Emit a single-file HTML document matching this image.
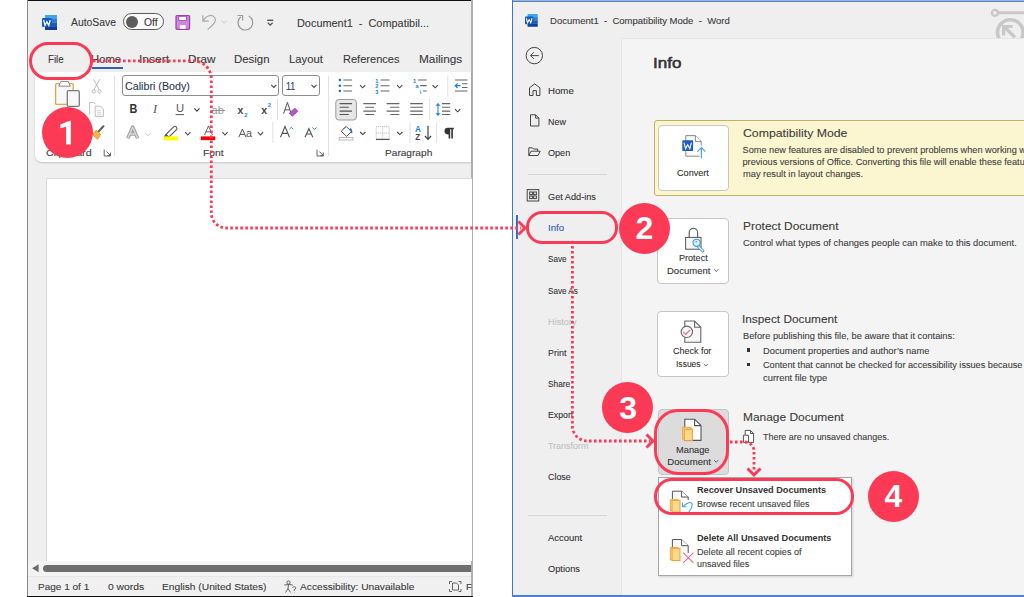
<!DOCTYPE html><html><head><meta charset="utf-8"><style>html,body{margin:0;padding:0;width:1024px;height:597px;overflow:hidden;background:#fff;position:relative}div{box-sizing:border-box}svg{position:absolute;overflow:visible}</style></head><body>
<div style="position:absolute;left:27px;top:0px;width:446px;height:597px;background:#efefef;"></div>
<div style="position:absolute;left:27px;top:0px;width:446px;height:1.2px;background:#111;"></div>
<div style="position:absolute;left:27px;top:0px;width:1px;height:597px;background:#8a8a8a;"></div>
<div style="position:absolute;left:471px;top:0px;width:2px;height:597px;background:#b0b0b0;"></div>
<div style="position:absolute;left:27px;top:596px;width:446px;height:1px;background:#111;"></div>
<div style="position:absolute;left:71.40px;top:17.00px;font-family:'Liberation Sans',sans-serif;font-size:10.8px;line-height:10.8px;font-weight:400;color:#3b3b3b;white-space:pre;transform:scaleX(0.9591);transform-origin:0 0;-webkit-text-stroke:0.1px currentColor;">AutoSave</div>
<div style="position:absolute;left:123.2px;top:13.4px;width:40.5px;height:17.1px;border:1.3px solid #5a5a5a;border-radius:9px;background:#fafafa;"></div>
<div style="position:absolute;left:126px;top:15.7px;width:12px;height:12px;border-radius:50%;background:#5c5c5c;"></div>
<div style="position:absolute;left:143.70px;top:17.00px;font-family:'Liberation Sans',sans-serif;font-size:10.6px;line-height:10.6px;font-weight:400;color:#3b3b3b;white-space:pre;transform:scaleX(0.9791);transform-origin:0 0;-webkit-text-stroke:0.1px currentColor;">Off</div>
<div style="position:absolute;left:297.40px;top:18.00px;font-family:'Liberation Sans',sans-serif;font-size:10.8px;line-height:10.8px;font-weight:400;color:#3b3b3b;white-space:pre;transform:scaleX(1.0098);transform-origin:0 0;-webkit-text-stroke:0.1px currentColor;">Document1  -  Compatibil...</div>
<svg style="left:0;top:0" width="1024" height="597" viewBox="0 0 1024 597"><g transform="translate(42,15) scale(1.0)">
<rect x="3" y="0" width="12" height="3.9" fill="#41a5ee"/>
<rect x="3" y="3.75" width="12" height="3.9" fill="#2b7cd3"/>
<rect x="3" y="7.5" width="12" height="3.9" fill="#185abd"/>
<rect x="3" y="11.25" width="12" height="3.75" fill="#103f91"/>
<rect x="0" y="3" width="9.8" height="9" rx="1" fill="#185abd"/>
<path d="M1.6 5.0 L3.0 10.4 L4.9 6.6 L6.8 10.4 L8.2 5.0" stroke="#fff" stroke-width="1.25" fill="none"/>
</g>
<rect x="176" y="15.5" width="13.6" height="13.8" rx="1" fill="#c98bd6" stroke="#a23cb4" stroke-width="1.2"/>
<rect x="178.8" y="16.3" width="7.6" height="4.2" fill="#fff" stroke="#a23cb4" stroke-width="0.8"/>
<rect x="179.8" y="25.2" width="5.8" height="3.6" fill="#fff"/>
<path d="M202.8 15.3 V21.2 H208.7 M203.3 20.7 C206 15.5 212 13.5 215 18 C217.3 21.5 211.5 26.5 207.6 29.6" stroke="#aaa" stroke-width="1.2" fill="none"/>
<path d="M221.5 20.599999999999998 L224.1 23.2 L226.7 20.599999999999998" stroke="#c4c4c4" stroke-width="1.0" fill="none"/>
<path d="M240.8 16.8 A7.4 7.4 0 1 0 248.7 16.0" stroke="#999" stroke-width="1.2" fill="none"/>
<path d="M237.6 15.5 H242.6 V20.5" stroke="#999" stroke-width="1.2" fill="none"/>
<path d="M267.2 20.3 H273.3" stroke="#555" stroke-width="1.4"/>
<path d="M267.8 22.8 L270.2 25.2 L272.59999999999997 22.8" stroke="#555" stroke-width="1.3" fill="none"/></svg>
<div style="position:absolute;left:48.30px;top:54.00px;font-family:'Liberation Sans',sans-serif;font-size:10.8px;line-height:10.8px;font-weight:400;color:#3a3a3a;white-space:pre;transform:scaleX(0.8969);transform-origin:0 0;-webkit-text-stroke:0.1px currentColor;">File</div>
<div style="position:absolute;left:91.40px;top:54.00px;font-family:'Liberation Sans',sans-serif;font-size:10.8px;line-height:10.8px;font-weight:400;color:#3a3a3a;white-space:pre;transform:scaleX(1.0453);transform-origin:0 0;-webkit-text-stroke:0.1px currentColor;">Home</div>
<div style="position:absolute;left:138.68px;top:54.00px;font-family:'Liberation Sans',sans-serif;font-size:10.8px;line-height:10.8px;font-weight:400;color:#3a3a3a;white-space:pre;transform:scaleX(1.1153);transform-origin:0 0;-webkit-text-stroke:0.1px currentColor;">Insert</div>
<div style="position:absolute;left:188.00px;top:54.00px;font-family:'Liberation Sans',sans-serif;font-size:10.8px;line-height:10.8px;font-weight:400;color:#3a3a3a;white-space:pre;transform:scaleX(1.0867);transform-origin:0 0;-webkit-text-stroke:0.1px currentColor;">Draw</div>
<div style="position:absolute;left:234.00px;top:54.00px;font-family:'Liberation Sans',sans-serif;font-size:10.8px;line-height:10.8px;font-weight:400;color:#3a3a3a;white-space:pre;transform:scaleX(1.0564);transform-origin:0 0;-webkit-text-stroke:0.1px currentColor;">Design</div>
<div style="position:absolute;left:289.00px;top:54.00px;font-family:'Liberation Sans',sans-serif;font-size:10.8px;line-height:10.8px;font-weight:400;color:#3a3a3a;white-space:pre;transform:scaleX(1.0427);transform-origin:0 0;-webkit-text-stroke:0.1px currentColor;">Layout</div>
<div style="position:absolute;left:342.60px;top:54.00px;font-family:'Liberation Sans',sans-serif;font-size:10.8px;line-height:10.8px;font-weight:400;color:#3a3a3a;white-space:pre;transform:scaleX(1.0230);transform-origin:0 0;-webkit-text-stroke:0.1px currentColor;">References</div>
<div style="position:absolute;left:418.50px;top:54.00px;font-family:'Liberation Sans',sans-serif;font-size:10.8px;line-height:10.8px;font-weight:400;color:#3a3a3a;white-space:pre;transform:scaleX(1.0919);transform-origin:0 0;-webkit-text-stroke:0.1px currentColor;">Mailings</div>
<div style="position:absolute;left:91.8px;top:67px;width:31px;height:2px;background:#2f62b8;"></div>
<div style="position:absolute;left:34.5px;top:71.5px;width:436.5px;height:90px;background:#fff;border-radius:7px 0 0 7px;box-shadow:0 1px 2px rgba(0,0,0,0.18);"></div>
<div style="position:absolute;left:46.30px;top:148.00px;font-family:'Liberation Sans',sans-serif;font-size:9.6px;line-height:9.6px;font-weight:400;color:#3b3b3b;white-space:pre;transform:scaleX(1.1098);transform-origin:0 0;-webkit-text-stroke:0.1px currentColor;">Clipboard</div>
<div style="position:absolute;left:203.00px;top:148.00px;font-family:'Liberation Sans',sans-serif;font-size:9.6px;line-height:9.6px;font-weight:400;color:#3b3b3b;white-space:pre;transform:scaleX(1.0752);transform-origin:0 0;-webkit-text-stroke:0.1px currentColor;">Font</div>
<div style="position:absolute;left:384.80px;top:148.00px;font-family:'Liberation Sans',sans-serif;font-size:9.6px;line-height:9.6px;font-weight:400;color:#3b3b3b;white-space:pre;transform:scaleX(1.0547);transform-origin:0 0;-webkit-text-stroke:0.1px currentColor;">Paragraph</div>
<div style="position:absolute;left:122.4px;top:75px;width:156.8px;height:21px;border:1px solid #8d8d8d;border-radius:3px;background:#fff;"></div>
<div style="position:absolute;left:125.20px;top:81.00px;font-family:'Liberation Sans',sans-serif;font-size:10.5px;line-height:10.5px;font-weight:400;color:#2b3a55;white-space:pre;transform:scaleX(1.0205);transform-origin:0 0;-webkit-text-stroke:0.1px currentColor;">Calibri (Body)</div>
<div style="position:absolute;left:282px;top:75px;width:38px;height:21px;border:1px solid #8d8d8d;border-radius:3px;background:#fff;"></div>
<div style="position:absolute;left:285.60px;top:81.00px;font-family:'Liberation Sans',sans-serif;font-size:10.5px;line-height:10.5px;font-weight:400;color:#2b3a55;white-space:pre;transform:scaleX(0.8408);transform-origin:0 0;-webkit-text-stroke:0.1px currentColor;">11</div>
<div style="position:absolute;left:114px;top:76px;width:1px;height:80px;background:#e1e1e1;"></div>
<div style="position:absolute;left:327.5px;top:76px;width:1px;height:80px;background:#e1e1e1;"></div>
<svg style="left:0;top:0" width="1024" height="597" viewBox="0 0 1024 597">
<rect x="55.6" y="83.6" width="17.6" height="20.8" rx="1" fill="#f6f8fc" stroke="#e9a440" stroke-width="1.3"/>
<path d="M58.8 86.2 L60.8 81.4 H68.2 L70.2 86.2 Z" fill="#fff" stroke="#8a8a8a" stroke-width="1"/>
<rect x="67.3" y="90.6" width="12" height="15.8" rx="1.5" fill="#f8f8f8" stroke="#7a7a7a" stroke-width="1.3"/>
<path d="M93.5 79.2 L99.5 90 M99.8 79.2 L93.8 90" stroke="#b5b5b5" stroke-width="0.9" fill="none"/>
<circle cx="93.9" cy="91.4" r="1.6" stroke="#b5b5b5" stroke-width="0.9" fill="none"/>
<circle cx="99.4" cy="91.4" r="1.6" stroke="#b5b5b5" stroke-width="0.9" fill="none"/>
<path d="M89.6 114.4 V102.6 H93.8 L95.2 104" stroke="#b8b8b8" stroke-width="0.9" fill="none"/>
<path d="M95.2 106.2 H100.5 L103.4 109.1 V116.4 H95.2 Z" stroke="#b8b8b8" stroke-width="0.9" fill="#fafafa"/>
<path d="M97.2 110.5 H100.8 M97.2 112.5 H100.8 M97.2 114.3 H100.8" stroke="#cfcfcf" stroke-width="0.8"/>
<path d="M103.4 126.3 L98.6 131.5" stroke="#666" stroke-width="2.2" stroke-linecap="round"/>
<path d="M96 130.2 L100.6 134.6 L97.6 139.2 L92.6 134.6 Z" fill="#f3b54a" stroke="#e0942a" stroke-width="0.9"/>
<path d="M104.2 149.5 V156 H110.7 M106.5 151.5 L110.5 155.5 M110.5 152.5 V155.5 H107.5" stroke="#555" stroke-width="0.9" fill="none"/>
<path d="M271.3 84.95 L273.8 87.45 L276.3 84.95" stroke="#444" stroke-width="1.1" fill="none"/><path d="M311.5 84.95 L314 87.45 L316.5 84.95" stroke="#444" stroke-width="1.1" fill="none"/>
<text transform="translate(129.4,113.2) scale(0.86,1)" font-family="Liberation Sans" font-weight="700" font-size="12.6" fill="#333">B</text>
<text x="153" y="113.2" font-family="Liberation Serif" font-style="italic" font-size="12.4" fill="#555">I</text>
<text x="176" y="112.2" font-family="Liberation Sans" font-size="11.2" fill="#555">U</text>
<path d="M175.6 114.6 H184" stroke="#555" stroke-width="1"/>
<path d="M194.3 108.39999999999999 L196.9 111.2 L199.5 108.39999999999999" stroke="#444" stroke-width="1.1" fill="none"/>
<text x="211.6" y="114" font-family="Liberation Sans" font-size="11" fill="#9a9a9a">ab</text>
<path d="M211 110.5 H225" stroke="#8a8a8a" stroke-width="0.9"/>
<text x="237.6" y="113.6" font-family="Liberation Sans" font-weight="700" font-size="10.5" fill="#444">x</text>
<text x="244.2" y="116.6" font-family="Liberation Sans" font-weight="700" font-size="6" fill="#2a8ad8">2</text>
<text x="261.2" y="113.6" font-family="Liberation Sans" font-weight="700" font-size="10.5" fill="#444">x</text>
<text x="267.8" y="107.2" font-family="Liberation Sans" font-weight="700" font-size="6" fill="#2a8ad8">2</text>
<path d="M277.5 99 V120 M272.8 122 V143 M429.7 99 V120 M447.8 75.5 V96.5 M410 122 V143 M436.6 122 V143" stroke="#e0e0e0" stroke-width="1"/>
<path d="M283.6 113.7 L287.4 102.4 L291.2 113.7 M284.9 109.8 H289.9" stroke="#555" stroke-width="1" fill="none"/>
<path d="M289.3 113.2 L294.8 108.2 L297.8 111.2 L292.3 116.2 Z" fill="#b257c8" stroke="#9a3ab4" stroke-width="0.8"/>
<path d="M127.8 138.4 L132.7 127.2 L137.6 138.4 M129.8 134 H135.6" stroke="#a0a0a0" stroke-width="3.6" fill="none" stroke-linejoin="round"/>
<path d="M127.8 138.4 L132.7 127.2 L137.6 138.4 M129.8 134 H135.6" stroke="#d8d8d8" stroke-width="1.4" fill="none" stroke-linejoin="round"/>
<path d="M145.20000000000002 133.25 L147.8 135.75 L150.4 133.25" stroke="#c8c8c8" stroke-width="1.0" fill="none"/>
<path d="M166 134.4 L173.6 126.8 Q175 125.6 176.4 127 Q177.6 128.4 176.4 129.6 L168.8 137.2 Z M166 134.4 L164.6 136.6 L168.8 137.2" fill="#fff" stroke="#555" stroke-width="1.1" stroke-linejoin="round"/>
<rect x="163.9" y="136.4" width="14.1" height="4" fill="#ffff00"/>
<path d="M185.20000000000002 132.2 L187.8 135.0 L190.4 132.2" stroke="#444" stroke-width="1.1" fill="none"/>
<path d="M204.5 135.1 L208.5 125.9 L212.5 135.1 M205.8 131.8 H211.2" stroke="#555" stroke-width="0.9" fill="none"/>
<rect x="200.8" y="136.4" width="14.5" height="3.7" fill="#ff0000"/>
<path d="M222.4 132.2 L225 135.0 L227.6 132.2" stroke="#444" stroke-width="1.1" fill="none"/>
<path d="M238.8 137.3 L242.4 129 L246 137.3 M240 134.4 H244.8" stroke="#555" stroke-width="1" fill="none"/>
<text x="246" y="137.4" font-family="Liberation Sans" font-size="10.8" fill="#555">a</text>
<path d="M257.9 132.2 L260.5 135.0 L263.1 132.2" stroke="#444" stroke-width="1.1" fill="none"/>
<path d="M280.5 137.3 L285 126.5 L289.5 137.3 M282 133.4 H288" stroke="#555" stroke-width="1.1" fill="none"/>
<path d="M289.4 129.2 L291.3 127.3 L293.2 129.2" stroke="#2a8ad8" stroke-width="1" fill="none"/>
<path d="M305 137.3 L308.9 128.7 L312.8 137.3 M306.3 134 H311.5" stroke="#555" stroke-width="1.1" fill="none"/>
<path d="M312.4 127.5 L314.5 129.4 L316.6 127.5" stroke="#2a8ad8" stroke-width="1" fill="none"/>
<path d="M317 149.5 V156 H323.5 M319.3 151.5 L323.3 155.5 M323.3 152.5 V155.5 H320.3" stroke="#555" stroke-width="0.9" fill="none"/>
<circle cx="339.9" cy="80" r="1.3" fill="#1a6fd0"/><circle cx="339.9" cy="85.7" r="1.3" fill="#1a6fd0"/><circle cx="339.9" cy="91" r="1.3" fill="#1a6fd0"/>
<path d="M343.3 80 H352.1 M343.3 85.7 H352.1 M343.3 91 H352.1" stroke="#666" stroke-width="1.1"/>
<path d="M360.05 85.2 L362.7 87.8 L365.34999999999997 85.2" stroke="#444" stroke-width="1.1" fill="none"/>
<text x="375.2" y="82.6" font-family="Liberation Sans" font-weight="700" font-size="5.6" fill="#1a7fe0">1</text>
<text x="375.2" y="88.2" font-family="Liberation Sans" font-weight="700" font-size="5.6" fill="#1a7fe0">2</text>
<text x="375.2" y="93.6" font-family="Liberation Sans" font-weight="700" font-size="5.6" fill="#1a7fe0">3</text>
<path d="M380.6 80 H389.5 M380.6 85.7 H389.5 M380.6 91 H389.5" stroke="#666" stroke-width="1.1"/>
<path d="M396.95000000000005 85.2 L399.6 87.8 L402.25 85.2" stroke="#444" stroke-width="1.1" fill="none"/>
<text x="413" y="82.6" font-family="Liberation Sans" font-weight="700" font-size="5.6" fill="#1a7fe0">1</text>
<text x="415.4" y="88" font-family="Liberation Sans" font-weight="700" font-size="5.6" fill="#1a7fe0">a</text>
<text x="419.8" y="93.6" font-family="Liberation Sans" font-weight="700" font-size="5.6" fill="#1a7fe0">i</text>
<path d="M418 80 H426.7 M420.2 85.6 H426.7 M423 91 H426.7" stroke="#666" stroke-width="1.1"/>
<path d="M432.55 85.2 L435.2 87.8 L437.84999999999997 85.2" stroke="#444" stroke-width="1.1" fill="none"/>
<path d="M455 80 H467.5 M462 83.8 H467.5 M462 87.5 H467.5 M455 91 H467.5" stroke="#666" stroke-width="1.1"/>
<path d="M455.3 85.7 H460.5 M457.6 83.4 L455.3 85.7 L457.6 88" stroke="#1a7fe0" stroke-width="1.2" fill="none"/>
<rect x="335.8" y="99.5" width="20.6" height="20.5" rx="3" fill="#e6e6e6" stroke="#9a9a9a" stroke-width="1"/>
<path d="M339.6 103.6 H352 M339.6 107.3 H348.8 M339.6 111.1 H352 M339.6 114.5 H348.8" stroke="#555" stroke-width="1.1"/>
<path d="M363.3 103.6 H376 M365.2 107.3 H374 M363.3 111.1 H376 M365.2 114.5 H374" stroke="#666" stroke-width="1.1"/>
<path d="M386.6 103.6 H399.4 M390.2 107.3 H399.4 M386.6 111.1 H399.4 M390.2 114.5 H399.4" stroke="#666" stroke-width="1.1"/>
<path d="M410.2 103.6 H422.9 M410.2 107.3 H422.9 M410.2 111.1 H422.9 M410.2 114.5 H422.9" stroke="#666" stroke-width="1.1"/>
<path d="M438 105 V114" stroke="#1a7fe0" stroke-width="1"/>
<path d="M436.2 105.6 L438 103.3 L439.8 105.6 Z M436.2 113.4 L438 115.7 L439.8 113.4 Z" fill="#1a7fe0" stroke="#1a7fe0" stroke-width="0.6"/>
<path d="M442 103.6 H450.2 M442 107.3 H450.2 M442 111.1 H450.2 M442 114.5 H450.2" stroke="#666" stroke-width="1.1"/>
<path d="M454.95000000000005 109.2 L457.6 111.8 L460.25 109.2" stroke="#444" stroke-width="1.1" fill="none"/>
<path d="M341.2 131.2 L346.2 126.4 L351.4 131.6 L346.6 136.4 Z M343.4 129 L345.2 127.2" fill="#fff" stroke="#555" stroke-width="1"/>
<path d="M350 128.6 Q352 129.6 351.6 133.2" stroke="#1a6fd0" stroke-width="1.4" fill="none"/>
<rect x="339.2" y="137.4" width="13.8" height="2.6" fill="#fff" stroke="#aaa" stroke-width="0.8"/>
<path d="M360.15000000000003 132.0 L362.8 134.60000000000002 L365.45 132.0" stroke="#444" stroke-width="1.1" fill="none"/>
<rect x="376.2" y="126.6" width="13" height="13" fill="none" stroke="#aaa" stroke-width="0.8" stroke-dasharray="1 1"/>
<path d="M382.7 126.6 V139.6 M376.2 133.1 H389.2" stroke="#aaa" stroke-width="0.8" stroke-dasharray="1 1"/>
<path d="M376 139.4 H389.5" stroke="#555" stroke-width="1.3"/>
<path d="M397.15000000000003 132.0 L399.8 134.60000000000002 L402.45 132.0" stroke="#444" stroke-width="1.1" fill="none"/>
<text x="415" y="131.8" font-family="Liberation Sans" font-weight="700" font-size="8.2" fill="#1a7fe0">A</text>
<text x="415.2" y="140.2" font-family="Liberation Sans" font-weight="700" font-size="8.2" fill="#444">Z</text>
<path d="M428 125.7 V139.2 M424.9 136 L428 139.4 L431.1 136" stroke="#444" stroke-width="1.2" fill="none"/>
<path d="M453.8 127.8 H447.8 A3.3 3.3 0 0 0 447.8 134.4 H448.6 V138.5 H450.2 V129.3 H451.3 V138.5 H452.9 V129.3 H453.8 Z" fill="#333"/>
</svg>
<div style="position:absolute;left:46.4px;top:178px;width:426px;height:383px;background:#fff;border-left:1px solid #d9d9d9;border-top:1px solid #d9d9d9;"></div>
<div style="position:absolute;left:28px;top:561px;width:443px;height:15px;background:#f3f3f3;"></div>
<div style="position:absolute;left:28px;top:576px;width:443px;height:1px;background:#e6e6e6;"></div>
<div style="position:absolute;left:28px;top:577px;width:443px;height:19px;background:#f0f0f0;"></div>
<div style="position:absolute;left:43.2px;top:564.5px;width:428px;height:7.7px;background:#6d6d6d;border-radius:4px 0 0 4px;"></div>
<svg style="left:0;top:0" width="1024" height="597" viewBox="0 0 1024 597"><path d="M32 568.3 L38.6 564.3 V572.3 Z" fill="#6d6d6d"/>
<circle cx="288.5" cy="582.5" r="1.6" stroke="#555" stroke-width="0.9" fill="none"/>
<path d="M284.3 585 L288.5 584.5 L292.8 585 M288.5 584.5 L288 588.5 L285.5 592.5 M288 588.5 L290.5 592.5" stroke="#555" stroke-width="0.9" fill="none"/>
<path d="M292.5 587.5 Q294.5 585.8 295.8 587.4 Q296 589 294.2 589.8 V591 M294.2 592.4 V592.8" stroke="#555" stroke-width="0.9" fill="none"/>
<path d="M449.5 584 V581.5 H452 M449.5 589 V591.5 H452 M461 584 V581.5 H458.5 M461 589 V591.5 H458.5" stroke="#555" stroke-width="0.9" fill="none"/>
<path d="M452.5 583 H456.5 L458.5 585 V590 H452.5 Z" stroke="#555" stroke-width="0.9" fill="none"/>
</svg>
<div style="position:absolute;left:38.00px;top:582.00px;font-family:'Liberation Sans',sans-serif;font-size:9.6px;line-height:9.6px;font-weight:400;color:#3b3b3b;white-space:pre;transform:scaleX(1.0443);transform-origin:0 0;-webkit-text-stroke:0.1px currentColor;">Page 1 of 1</div>
<div style="position:absolute;left:107.60px;top:582.00px;font-family:'Liberation Sans',sans-serif;font-size:9.6px;line-height:9.6px;font-weight:400;color:#3b3b3b;white-space:pre;transform:scaleX(1.0771);transform-origin:0 0;-webkit-text-stroke:0.1px currentColor;">0 words</div>
<div style="position:absolute;left:162.30px;top:582.00px;font-family:'Liberation Sans',sans-serif;font-size:9.6px;line-height:9.6px;font-weight:400;color:#3b3b3b;white-space:pre;transform:scaleX(1.0651);transform-origin:0 0;-webkit-text-stroke:0.1px currentColor;">English (United States)</div>
<div style="position:absolute;left:300.30px;top:582.00px;font-family:'Liberation Sans',sans-serif;font-size:9.6px;line-height:9.6px;font-weight:400;color:#3b3b3b;white-space:pre;transform:scaleX(1.0617);transform-origin:0 0;-webkit-text-stroke:0.1px currentColor;">Accessibility: Unavailable</div>
<div style="position:absolute;left:466.00px;top:582.00px;font-family:'Liberation Sans',sans-serif;font-size:9.6px;line-height:9.6px;font-weight:400;color:#3b3b3b;white-space:pre;-webkit-text-stroke:0.1px currentColor;">F</div>
<div style="position:absolute;left:512px;top:0px;width:512px;height:597px;background:#efefef;"></div>
<div style="position:absolute;left:512px;top:0px;width:512px;height:1px;background:#a9b2c2;"></div>
<div style="position:absolute;left:512px;top:1px;width:512px;height:1.2px;background:#4d84d8;"></div>
<div style="position:absolute;left:512px;top:0px;width:1.2px;height:597px;background:#3a76d6;"></div>
<div style="position:absolute;left:512px;top:595px;width:512px;height:2px;background:#4a82d8;"></div>
<div style="position:absolute;left:549.90px;top:17.00px;font-family:'Liberation Sans',sans-serif;font-size:9.0px;line-height:9.0px;font-weight:400;color:#3b3b3b;white-space:pre;transform:scaleX(1.0578);transform-origin:0 0;-webkit-text-stroke:0.1px currentColor;">Document1  -  Compatibility Mode  -  Word</div>
<svg style="left:0;top:0" width="1024" height="597" viewBox="0 0 1024 597"><g transform="translate(525,14) scale(0.85)">
<rect x="3" y="0" width="12" height="3.9" fill="#41a5ee"/>
<rect x="3" y="3.75" width="12" height="3.9" fill="#2b7cd3"/>
<rect x="3" y="7.5" width="12" height="3.9" fill="#185abd"/>
<rect x="3" y="11.25" width="12" height="3.75" fill="#103f91"/>
<rect x="0" y="3" width="9.8" height="9" rx="1" fill="#185abd"/>
<path d="M1.6 5.0 L3.0 10.4 L4.9 6.6 L6.8 10.4 L8.2 5.0" stroke="#fff" stroke-width="1.25" fill="none"/>
</g>
<circle cx="994.9" cy="12.8" r="3" stroke="#c8c8c8" stroke-width="2.2" fill="none"/>
<path d="M998 12.8 H1030" stroke="#c8c8c8" stroke-width="3"/>
<circle cx="1010.3" cy="32.5" r="12.8" stroke="#c8c8c8" stroke-width="3.6" fill="none"/>
<path d="M1004.5 27 L1015 37.5 M1003.6 35.5 V26.5 H1012.5" stroke="#c8c8c8" stroke-width="3.2" fill="none"/>
</svg>
<div style="position:absolute;left:621px;top:38px;width:403px;height:557px;background:#f4f4f4;border-left:1px solid #e6e6e6;border-top:1px solid #e6e6e6;"></div>
<div style="position:absolute;left:547.60px;top:87.00px;font-family:'Liberation Sans',sans-serif;font-size:9.3px;line-height:9.3px;font-weight:400;color:#333;white-space:pre;transform:scaleX(1.0394);transform-origin:0 0;-webkit-text-stroke:0.1px currentColor;">Home</div>
<div style="position:absolute;left:547.60px;top:118.00px;font-family:'Liberation Sans',sans-serif;font-size:9.3px;line-height:9.3px;font-weight:400;color:#333;white-space:pre;transform:scaleX(0.9585);transform-origin:0 0;-webkit-text-stroke:0.1px currentColor;">New</div>
<div style="position:absolute;left:547.60px;top:149.00px;font-family:'Liberation Sans',sans-serif;font-size:9.3px;line-height:9.3px;font-weight:400;color:#333;white-space:pre;transform:scaleX(0.9746);transform-origin:0 0;-webkit-text-stroke:0.1px currentColor;">Open</div>
<div style="position:absolute;left:547.60px;top:193.00px;font-family:'Liberation Sans',sans-serif;font-size:9.3px;line-height:9.3px;font-weight:400;color:#333;white-space:pre;transform:scaleX(0.9870);transform-origin:0 0;-webkit-text-stroke:0.1px currentColor;">Get Add-ins</div>
<div style="position:absolute;left:547.60px;top:224.00px;font-family:'Liberation Sans',sans-serif;font-size:9.3px;line-height:9.3px;font-weight:400;color:#2b5cb2;white-space:pre;transform:scaleX(1.0367);transform-origin:0 0;-webkit-text-stroke:0.1px currentColor;">Info</div>
<div style="position:absolute;left:547.60px;top:255.00px;font-family:'Liberation Sans',sans-serif;font-size:9.3px;line-height:9.3px;font-weight:400;color:#333;white-space:pre;transform:scaleX(0.8754);transform-origin:0 0;-webkit-text-stroke:0.1px currentColor;">Save</div>
<div style="position:absolute;left:547.60px;top:287.00px;font-family:'Liberation Sans',sans-serif;font-size:9.3px;line-height:9.3px;font-weight:400;color:#333;white-space:pre;transform:scaleX(0.8749);transform-origin:0 0;-webkit-text-stroke:0.1px currentColor;">Save As</div>
<div style="position:absolute;left:547.60px;top:318.00px;font-family:'Liberation Sans',sans-serif;font-size:9.3px;line-height:9.3px;font-weight:400;color:#c2c2c2;white-space:pre;transform:scaleX(0.9871);transform-origin:0 0;-webkit-text-stroke:0.1px currentColor;">History</div>
<div style="position:absolute;left:547.60px;top:349.00px;font-family:'Liberation Sans',sans-serif;font-size:9.3px;line-height:9.3px;font-weight:400;color:#333;white-space:pre;transform:scaleX(0.9625);transform-origin:0 0;-webkit-text-stroke:0.1px currentColor;">Print</div>
<div style="position:absolute;left:547.60px;top:380.00px;font-family:'Liberation Sans',sans-serif;font-size:9.3px;line-height:9.3px;font-weight:400;color:#333;white-space:pre;transform:scaleX(0.8929);transform-origin:0 0;-webkit-text-stroke:0.1px currentColor;">Share</div>
<div style="position:absolute;left:547.60px;top:411.00px;font-family:'Liberation Sans',sans-serif;font-size:9.3px;line-height:9.3px;font-weight:400;color:#333;white-space:pre;transform:scaleX(0.9382);transform-origin:0 0;-webkit-text-stroke:0.1px currentColor;">Export</div>
<div style="position:absolute;left:547.60px;top:442.00px;font-family:'Liberation Sans',sans-serif;font-size:9.3px;line-height:9.3px;font-weight:400;color:#c2c2c2;white-space:pre;transform:scaleX(0.9605);transform-origin:0 0;-webkit-text-stroke:0.1px currentColor;">Transform</div>
<div style="position:absolute;left:547.60px;top:473.00px;font-family:'Liberation Sans',sans-serif;font-size:9.3px;line-height:9.3px;font-weight:400;color:#333;white-space:pre;transform:scaleX(0.9577);transform-origin:0 0;-webkit-text-stroke:0.1px currentColor;">Close</div>
<div style="position:absolute;left:547.60px;top:534.00px;font-family:'Liberation Sans',sans-serif;font-size:9.3px;line-height:9.3px;font-weight:400;color:#333;white-space:pre;transform:scaleX(1.0174);transform-origin:0 0;-webkit-text-stroke:0.1px currentColor;">Account</div>
<div style="position:absolute;left:547.60px;top:565.00px;font-family:'Liberation Sans',sans-serif;font-size:9.3px;line-height:9.3px;font-weight:400;color:#333;white-space:pre;transform:scaleX(0.9972);transform-origin:0 0;-webkit-text-stroke:0.1px currentColor;">Options</div>
<div style="position:absolute;left:528px;top:174px;width:78.5px;height:1px;background:#d5d5d5;"></div>
<div style="position:absolute;left:528px;top:515px;width:78.5px;height:1px;background:#d5d5d5;"></div>
<div style="position:absolute;left:516px;top:214.7px;width:2.2px;height:24.6px;background:#3a6cc0;"></div>
<svg style="left:0;top:0" width="1024" height="597" viewBox="0 0 1024 597"><g stroke="#444" stroke-width="1" fill="none">
<circle cx="534.3" cy="55.6" r="8.2"/>
<path d="M530.6 55.6 H538.8 M533.9 52.2 L530.5 55.6 L533.9 59"/>
<path d="M529.5 95.5 V87.8 L534.7 83.9 L539.9 87.8 V95.5 H536.4 V90.6 H533 V95.5 Z" stroke-linejoin="round"/>
<path d="M530.5 114.8 H535.6 L538.9 118.1 V126 H530.5 Z M535.6 114.8 V118.1 H538.9"/>
<path d="M528.8 155.5 V147.8 H532.4 L533.6 149 H537.6 V151.2 M528.8 155.5 L531 151.2 H540.2 L538 155.5 Z" stroke-linejoin="round"/>
<rect x="527.2" y="189.6" width="11.6" height="11.4"/>
<rect x="529.6" y="192" width="2.8" height="2.6"/><rect x="533.6" y="192" width="2.8" height="2.6"/>
<rect x="529.6" y="196" width="2.8" height="2.6"/><rect x="533.6" y="196" width="2.8" height="2.6"/>
</g></svg>
<div style="position:absolute;left:652.63px;top:56.00px;font-family:'Liberation Sans',sans-serif;font-size:14.5px;line-height:14.5px;font-weight:400;color:#333;white-space:pre;transform:scaleX(1.1721);transform-origin:0 0;-webkit-text-stroke:0.1px currentColor;-webkit-text-stroke:0.55px #333;">Info</div>
<div style="position:absolute;left:653.7px;top:119.5px;width:400px;height:76.6px;background:#fcf6d0;border:1.2px solid #c2b06a;border-radius:3px;"></div>
<div style="position:absolute;left:657.6px;top:125px;width:71.3px;height:66.4px;background:#fff;border:1px solid #c6c6c6;border-radius:4px;"></div>
<div style="position:absolute;left:676.70px;top:168.00px;font-family:'Liberation Sans',sans-serif;font-size:9.6px;line-height:9.6px;font-weight:400;color:#333;white-space:pre;transform:scaleX(0.9491);transform-origin:0 0;-webkit-text-stroke:0.1px currentColor;">Convert</div>
<svg style="left:0;top:0" width="1024" height="597" viewBox="0 0 1024 597"><path d="M685.8 145 V135.6 H695.4 L701.2 141.4 V145.5 M685.8 151 V156.2 H699.5" stroke="#8a8a8a" stroke-width="1" fill="#f8f8f8"/>
<path d="M695.4 135.6 V141.4 H701.2" stroke="#8a8a8a" stroke-width="1" fill="#fff"/>
<rect x="682.3" y="140.3" width="10.8" height="10.8" rx="0.8" fill="#1f5bc6"/>
<path d="M684 142.6 L685.6 148.8 L687.7 144.8 L689.8 148.8 L691.4 142.6" stroke="#fff" stroke-width="1.1" fill="none"/>
<path d="M701.4 147.8 V158.3 M697.4 151.6 L701.4 147.6 L705.4 151.6" stroke="#4aa3e6" stroke-width="1.2" fill="none"/>
</svg>
<div style="position:absolute;left:742.50px;top:128.00px;font-family:'Liberation Sans',sans-serif;font-size:11.8px;line-height:11.8px;font-weight:400;color:#3b3b3b;white-space:pre;transform:scaleX(1.0412);transform-origin:0 0;-webkit-text-stroke:0.1px currentColor;">Compatibility Mode</div>
<div style="position:absolute;left:742.50px;top:146.00px;font-family:'Liberation Sans',sans-serif;font-size:9.2px;line-height:9.2px;font-weight:400;color:#404040;white-space:pre;-webkit-text-stroke:0.1px currentColor;">Some new features are disabled to prevent problems when working with</div>
<div style="position:absolute;left:742.50px;top:158.00px;font-family:'Liberation Sans',sans-serif;font-size:9.2px;line-height:9.2px;font-weight:400;color:#404040;white-space:pre;-webkit-text-stroke:0.1px currentColor;">previous versions of Office. Converting this file will enable these features, but</div>
<div style="position:absolute;left:742.50px;top:170.00px;font-family:'Liberation Sans',sans-serif;font-size:9.2px;line-height:9.2px;font-weight:400;color:#404040;white-space:pre;transform:scaleX(1.0090);transform-origin:0 0;-webkit-text-stroke:0.1px currentColor;">may result in layout changes.</div>
<div style="position:absolute;left:657.4px;top:217.7px;width:71.3px;height:66.8px;background:#fff;border:1px solid #c6c6c6;border-radius:4px;"></div>
<div style="position:absolute;left:678.80px;top:253.00px;font-family:'Liberation Sans',sans-serif;font-size:9.6px;line-height:9.6px;font-weight:400;color:#333;white-space:pre;transform:scaleX(0.9438);transform-origin:0 0;-webkit-text-stroke:0.1px currentColor;">Protect</div>
<svg style="left:0;top:0" width="1024" height="597" viewBox="0 0 1024 597"><path d="M689.2 237.2 V232.6 A4.2 4.2 0 0 1 697.6 232.6 V237.2" stroke="#666" stroke-width="1.2" fill="none"/>
<rect x="685.6" y="237.4" width="15.4" height="11.8" fill="#f8f8f8" stroke="#555" stroke-width="1"/>
<path d="M698.5 245.2 L704.2 250.8 L702.6 252.2 L697 246.8" fill="#dbeefc" stroke="#3a9ae0" stroke-width="1"/>
<circle cx="696.6" cy="242.8" r="3.6" fill="#dbeefc" stroke="#3a9ae0" stroke-width="1.1"/>
<circle cx="696.2" cy="241.8" r="0.8" fill="#3a9ae0"/>
<path d="M714.3 269.29999999999995 L716.3 271.5 L718.3 269.29999999999995" stroke="#555" stroke-width="0.9" fill="none"/></svg>
<div style="position:absolute;left:667.20px;top:266.00px;font-family:'Liberation Sans',sans-serif;font-size:9.6px;line-height:9.6px;font-weight:400;color:#333;white-space:pre;transform:scaleX(0.9918);transform-origin:0 0;-webkit-text-stroke:0.1px currentColor;">Document</div>
<div style="position:absolute;left:742.80px;top:221.00px;font-family:'Liberation Sans',sans-serif;font-size:11.8px;line-height:11.8px;font-weight:400;color:#3b3b3b;white-space:pre;transform:scaleX(1.0112);transform-origin:0 0;-webkit-text-stroke:0.1px currentColor;">Protect Document</div>
<div style="position:absolute;left:742.80px;top:239.00px;font-family:'Liberation Sans',sans-serif;font-size:9.2px;line-height:9.2px;font-weight:400;color:#404040;white-space:pre;transform:scaleX(1.0191);transform-origin:0 0;-webkit-text-stroke:0.1px currentColor;">Control what types of changes people can make to this document.</div>
<div style="position:absolute;left:657.4px;top:310.7px;width:71.3px;height:66.4px;background:#fff;border:1px solid #c6c6c6;border-radius:4px;"></div>
<div style="position:absolute;left:673.40px;top:346.00px;font-family:'Liberation Sans',sans-serif;font-size:9.6px;line-height:9.6px;font-weight:400;color:#333;white-space:pre;transform:scaleX(0.9341);transform-origin:0 0;-webkit-text-stroke:0.1px currentColor;">Check for</div>
<svg style="left:0;top:0" width="1024" height="597" viewBox="0 0 1024 597"><path d="M684.8 321 H694.6 L700.8 327.3 V342.2 H684.8 Z" fill="#f8f8f8" stroke="#666" stroke-width="1.1"/>
<path d="M694.6 321 V327.3 H700.8" stroke="#666" stroke-width="1.1" fill="none"/>
<circle cx="686.8" cy="331.8" r="5.7" fill="#f8f8f8" stroke="#666" stroke-width="1.1"/>
<path d="M683.4 332.2 L685.7 334.4 L690 329.9" stroke="#f06a86" stroke-width="1.2" fill="none"/>
<path d="M703.8 363.9 L705.8 366.1 L707.8 363.9" stroke="#555" stroke-width="0.9" fill="none"/></svg>
<div style="position:absolute;left:676.40px;top:359.00px;font-family:'Liberation Sans',sans-serif;font-size:9.6px;line-height:9.6px;font-weight:400;color:#333;white-space:pre;transform:scaleX(0.8879);transform-origin:0 0;-webkit-text-stroke:0.1px currentColor;">Issues</div>
<div style="position:absolute;left:741.80px;top:314.00px;font-family:'Liberation Sans',sans-serif;font-size:11.8px;line-height:11.8px;font-weight:400;color:#3b3b3b;white-space:pre;transform:scaleX(1.0032);transform-origin:0 0;-webkit-text-stroke:0.1px currentColor;">Inspect Document</div>
<div style="position:absolute;left:742.80px;top:332.00px;font-family:'Liberation Sans',sans-serif;font-size:9.2px;line-height:9.2px;font-weight:400;color:#404040;white-space:pre;transform:scaleX(1.0113);transform-origin:0 0;-webkit-text-stroke:0.1px currentColor;">Before publishing this file, be aware that it contains:</div>
<div style="position:absolute;left:762.70px;top:347.00px;font-family:'Liberation Sans',sans-serif;font-size:9.2px;line-height:9.2px;font-weight:400;color:#404040;white-space:pre;transform:scaleX(1.0140);transform-origin:0 0;-webkit-text-stroke:0.1px currentColor;">Document properties and author’s name</div>
<div style="position:absolute;left:762.70px;top:361.00px;font-family:'Liberation Sans',sans-serif;font-size:9.2px;line-height:9.2px;font-weight:400;color:#404040;white-space:pre;transform:scaleX(0.9960);transform-origin:0 0;-webkit-text-stroke:0.1px currentColor;">Content that cannot be checked for accessibility issues because</div>
<div style="position:absolute;left:762.70px;top:374.00px;font-family:'Liberation Sans',sans-serif;font-size:9.2px;line-height:9.2px;font-weight:400;color:#404040;white-space:pre;transform:scaleX(1.0223);transform-origin:0 0;-webkit-text-stroke:0.1px currentColor;">current file type</div>
<div style="position:absolute;left:746.7px;top:348.4px;width:3.3px;height:3.3px;background:#333;"></div>
<div style="position:absolute;left:746.7px;top:362.6px;width:3.3px;height:3.3px;background:#333;"></div>
<div style="position:absolute;left:657.6px;top:409px;width:71.3px;height:66px;background:#dcdcdc;border:1px solid #c4c4c4;border-radius:4px;"></div>
<div style="position:absolute;left:676.10px;top:445.00px;font-family:'Liberation Sans',sans-serif;font-size:9.6px;line-height:9.6px;font-weight:400;color:#333;white-space:pre;transform:scaleX(0.9670);transform-origin:0 0;-webkit-text-stroke:0.1px currentColor;">Manage</div>
<svg style="left:0;top:0" width="1024" height="597" viewBox="0 0 1024 597"><path d="M684.8 419.2 H694.6 L701 425.6 V440.4 H684.8 Z" fill="#fff" stroke="#555" stroke-width="1.1"/>
<path d="M694.6 419.2 V425.6 H701" stroke="#555" stroke-width="1.1" fill="none"/>
<rect x="682.6" y="427.3" width="8.4" height="11.6" fill="#f9dc92" stroke="#f0a444" stroke-width="1"/>
<rect x="684.3" y="429.2" width="8" height="11.4" fill="#f8da8c" stroke="#ee9c3a" stroke-width="1.1"/>
<path d="M714.2 460.09999999999997 L716.2 462.3 L718.2 460.09999999999997" stroke="#555" stroke-width="0.9" fill="none"/>
<g stroke="#555" stroke-width="1" fill="#fff">
<path d="M745.2 438 V430.4 H750.5 L753.6 433.5 V442.4 H748.8"/>
<path d="M750.5 430.4 V433.5 H753.6" fill="none"/>
<path d="M743.4 435.2 H748.6 V442.4 H743.4 Z"/>
</g></svg>
<div style="position:absolute;left:667.30px;top:457.00px;font-family:'Liberation Sans',sans-serif;font-size:9.6px;line-height:9.6px;font-weight:400;color:#333;white-space:pre;-webkit-text-stroke:0.1px currentColor;">Document</div>
<div style="position:absolute;left:742.80px;top:412.00px;font-family:'Liberation Sans',sans-serif;font-size:11.8px;line-height:11.8px;font-weight:400;color:#3b3b3b;white-space:pre;transform:scaleX(1.0120);transform-origin:0 0;-webkit-text-stroke:0.1px currentColor;">Manage Document</div>
<div style="position:absolute;left:763.30px;top:433.00px;font-family:'Liberation Sans',sans-serif;font-size:9.2px;line-height:9.2px;font-weight:400;color:#404040;white-space:pre;transform:scaleX(0.9723);transform-origin:0 0;-webkit-text-stroke:0.1px currentColor;">There are no unsaved changes.</div>
<div style="position:absolute;left:657.6px;top:476.6px;width:194px;height:99px;background:#fff;border:1px solid #a6a6a6;box-shadow:1px 1px 2px rgba(0,0,0,0.15);"></div>
<div style="position:absolute;left:697.40px;top:486.00px;font-family:'Liberation Sans',sans-serif;font-size:9.2px;line-height:9.2px;font-weight:700;color:#333;white-space:pre;transform:scaleX(0.9947);transform-origin:0 0;">Recover Unsaved Documents</div>
<div style="position:absolute;left:697.40px;top:500.00px;font-family:'Liberation Sans',sans-serif;font-size:9.2px;line-height:9.2px;font-weight:400;color:#404040;white-space:pre;transform:scaleX(0.9800);transform-origin:0 0;-webkit-text-stroke:0.1px currentColor;">Browse recent unsaved files</div>
<div style="position:absolute;left:697.40px;top:534.00px;font-family:'Liberation Sans',sans-serif;font-size:9.2px;line-height:9.2px;font-weight:700;color:#333;white-space:pre;transform:scaleX(0.9956);transform-origin:0 0;">Delete All Unsaved Documents</div>
<div style="position:absolute;left:697.40px;top:548.00px;font-family:'Liberation Sans',sans-serif;font-size:9.2px;line-height:9.2px;font-weight:400;color:#404040;white-space:pre;transform:scaleX(0.9891);transform-origin:0 0;-webkit-text-stroke:0.1px currentColor;">Delete all recent copies of</div>
<div style="position:absolute;left:697.40px;top:560.00px;font-family:'Liberation Sans',sans-serif;font-size:9.2px;line-height:9.2px;font-weight:400;color:#404040;white-space:pre;transform:scaleX(0.9735);transform-origin:0 0;-webkit-text-stroke:0.1px currentColor;">unsaved files</div>
<svg style="left:0;top:0" width="1024" height="597" viewBox="0 0 1024 597"><g>
<path d="M672.4 499 V491.2 H681.6 L688.2 497 V500" stroke="#555" stroke-width="1" fill="#f8f8f8"/>
<path d="M681.6 491.2 V497 H688.2" stroke="#555" stroke-width="1" fill="#fff"/>
<rect x="670.3" y="499.7" width="7.6" height="10.8" fill="#f9dc92" stroke="#f0a444" stroke-width="0.9"/>
<rect x="672" y="500.3" width="8" height="11.9" fill="#f8da8c" stroke="#ee9c3a" stroke-width="1"/>
<path d="M688.5 512.3 C693 507 693.5 502 689.5 502.5 C687 503 685 504.5 683.5 506" stroke="#4aa3e6" stroke-width="1.1" fill="none"/>
<path d="M682.4 502.6 V506.8 H686.4" stroke="#4aa3e6" stroke-width="1.1" fill="none"/>
<path d="M672.4 547.5 V539.5 H681.6 L688.2 545.7 V553" stroke="#555" stroke-width="1" fill="#f8f8f8"/>
<path d="M681.6 539.5 V545.7 H688.2" stroke="#555" stroke-width="1" fill="#fff"/>
<rect x="670.3" y="547.6" width="7.6" height="12.2" fill="#f9dc92" stroke="#f0a444" stroke-width="0.9"/>
<rect x="672" y="548.3" width="8" height="12.3" fill="#f8da8c" stroke="#ee9c3a" stroke-width="1"/>
<path d="M683.2 552.6 L693.4 562.8 M693.4 552.6 L683.2 562.8" stroke="#f06a86" stroke-width="1.1"/>
</g></svg>
<div style="position:absolute;left:29px;top:41.7px;width:63.5px;height:38.0px;border:3px solid #fd3a56;border-radius:19px;"></div>
<div style="position:absolute;left:526px;top:211.3px;width:92.20000000000005px;height:33.19999999999999px;border:3px solid #fd3a56;border-radius:16px;"></div>
<div style="position:absolute;left:654px;top:409px;width:74.5px;height:65.69999999999999px;border:3px solid #fd3a56;border-radius:24px;"></div>
<div style="position:absolute;left:654px;top:478.2px;width:200.39999999999998px;height:36.80000000000001px;border:3px solid #fd3a56;border-radius:18px;"></div>
<div style="position:absolute;left:41.900000000000006px;top:107.1px;width:51px;height:51px;background:#fd3a56;border-radius:50%;"></div>
<svg style="left:0;top:0" width="1024" height="597" viewBox="0 0 1024 597"><path d="M60.3 124.5 L66.4 122 L70.9 120.5 V144.4 H66.1 V126.8 L60.3 128.3 Z" fill="#fff"/></svg>
<div style="position:absolute;left:619.0px;top:202.5px;width:51px;height:51px;background:#fd3a56;border-radius:50%;"></div>
<div style="position:absolute;left:635.50px;top:212.00px;font-family:'Liberation Sans',sans-serif;font-size:32px;line-height:32px;font-weight:700;color:#fff;white-space:pre;">2</div>
<div style="position:absolute;left:602.2px;top:382.0px;width:51px;height:51px;background:#fd3a56;border-radius:50%;"></div>
<div style="position:absolute;left:619.20px;top:392.00px;font-family:'Liberation Sans',sans-serif;font-size:32px;line-height:32px;font-weight:700;color:#fff;white-space:pre;">3</div>
<div style="position:absolute;left:868.0px;top:470.8px;width:51px;height:51px;background:#fd3a56;border-radius:50%;"></div>
<div style="position:absolute;left:884.50px;top:480.00px;font-family:'Liberation Sans',sans-serif;font-size:32px;line-height:32px;font-weight:700;color:#fff;white-space:pre;">4</div>
<svg style="left:0;top:0" width="1024" height="597" viewBox="0 0 1024 597">
<g fill="none" stroke="#fd3a56" stroke-width="2.8">
<path d="M93 60.8 H193.3 A18 18 0 0 1 211.3 78.8 V213 A15 15 0 0 0 226.3 228 H521" stroke-dasharray="2.6 2.4"/>
<path d="M518.5 221.5 L525 228 L518.5 234.5" stroke-width="2.9"/>
<path d="M572.4 246 V426 A15 15 0 0 0 587.4 441 H650" stroke-dasharray="2.6 2.4"/>
<path d="M646.5 434.5 L653 441 L646.5 447.5" stroke-width="2.9"/>
<path d="M730 442 H745 A9 9 0 0 1 754 451 V472" stroke-dasharray="2.6 2.4"/>
<path d="M747.5 468.5 L754 475 L760.5 468.5" stroke-width="2.9"/>
</g></svg>
</body></html>
